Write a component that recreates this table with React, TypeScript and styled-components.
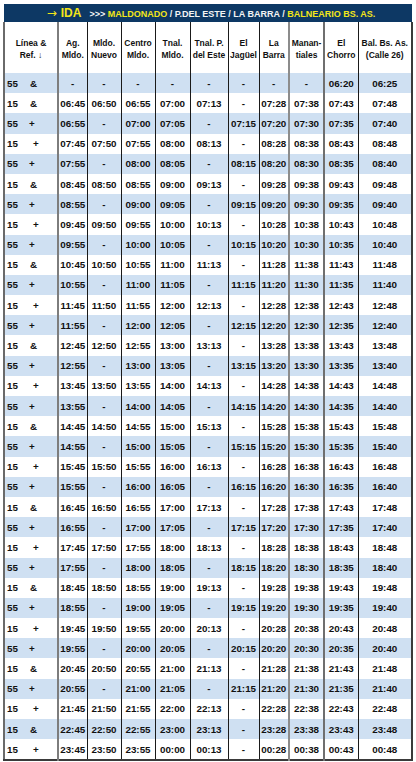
import styled, { createGlobalStyle } from "styled-components"

const NAVY = "#0d3864"
const YELLOW = "#f3e619"
const SHADE = "#cfe0f2"

const GlobalStyle = createGlobalStyle`
  html, body {
    margin: 0;
    padding: 0;
    background: #fff;
  }
  body {
    font-family: "Liberation Sans", Arial, sans-serif;
    color: #111;
  }
`

// widths of the eleven columns, and the rule on the right of each one
const COL_WIDTHS = [54, 29, 34, 34, 35, 38, 31, 30, 35, 34, 54]
const RIGHT_RULES = [
  "2px solid #7d7d7d",
  "1px solid #1a1a1a",
  "1px solid #1a1a1a",
  "1px solid #1a1a1a",
  "1px solid #1a1a1a",
  "1px solid #1a1a1a",
  "1px solid #1a1a1a",
  "2px solid #8c8c8c",
  "2px solid #6f6f6f",
  "1px solid #1a1a1a",
  "2px solid #3a3a3a",
]

const HEADINGS = [
  ["Línea &", "Ref. ↓"],
  ["Ag.", "Mldo."],
  ["Mldo.", "Nuevo"],
  ["Centro", "Mldo."],
  ["Tnal.", "Mldo."],
  ["Tnal. P.", "del Este"],
  ["El", "Jagüel"],
  ["La", "Barra"],
  ["Manan-", "tiales"],
  ["El", "Chorro"],
  ["Bal. Bs. As.", "(Calle 26)"],
]

type Trip = {
  line: "15" | "55"
  sign: "&" | "+"
  times: string[]
}

const hhmm = (h: number, m: number) =>
  `${String(h % 24).padStart(2, "0")}:${String(m).padStart(2, "0")}`

const line15 = (h: number): Trip => ({
  line: "15",
  sign: h % 2 === 0 ? "&" : "+",
  times: [
    hhmm(h, 45),
    hhmm(h, 50),
    hhmm(h, 55),
    hhmm(h + 1, 0),
    hhmm(h + 1, 13),
    "-",
    hhmm(h + 1, 28),
    hhmm(h + 1, 38),
    hhmm(h + 1, 43),
    hhmm(h + 1, 48),
  ],
})

const line55 = (h: number): Trip => ({
  line: "55",
  sign: "+",
  times: [
    hhmm(h, 55),
    "-",
    hhmm(h + 1, 0),
    hhmm(h + 1, 5),
    "-",
    hhmm(h + 1, 15),
    hhmm(h + 1, 20),
    hhmm(h + 1, 30),
    hhmm(h + 1, 35),
    hhmm(h + 1, 40),
  ],
})

const buildTrips = (): Trip[] => {
  const trips: Trip[] = [
    { line: "55", sign: "&", times: ["-", "-", "-", "-", "-", "-", "-", "-", "06:20", "06:25"] },
  ]
  for (let h = 6; h <= 20; h++) trips.push(line15(h), line55(h))
  for (let h = 21; h <= 23; h++) trips.push(line15(h))
  return trips
}

const TRIPS = buildTrips()

const App = () => {
  return (
    <Sheet>
      <GlobalStyle />
      <TitleBar>
        <Arrow>→</Arrow>
        <Direction>IDA</Direction>
        <Route>
          <Light>&gt;&gt;&gt; </Light>
          <Yellow>MALDONADO</Yellow>
          <Light> / P.DEL ESTE / LA BARRA / </Light>
          <Yellow>BALNEARIO BS. AS.</Yellow>
        </Route>
      </TitleBar>
      <Timetable>
        <colgroup>
          {COL_WIDTHS.map((w, i) => (
            <col key={i} style={{ width: w }} />
          ))}
        </colgroup>
        <thead>
          <tr>
            {HEADINGS.map(([a, b], i) => (
              <HeadCell key={i} $col={i}>
                {a}
                <br />
                {b}
              </HeadCell>
            ))}
          </tr>
        </thead>
        <tbody>
          {TRIPS.map((trip, r) => (
            <Row key={r} $shaded={r % 2 === 0}>
              <LineCell $col={0}>
                <LineNo>{trip.line}</LineNo>
                <Sign $shift={trip.sign === "&" ? 1 : trip.line === "15" ? 4 : 0}>
                  {trip.sign}
                </Sign>
              </LineCell>
              {trip.times.map((time, c) => (
                <Cell key={c} $col={c + 1}>
                  {time}
                </Cell>
              ))}
            </Row>
          ))}
        </tbody>
      </Timetable>
    </Sheet>
  )
}

const Sheet = styled.div`
  width: 409px;
  padding: 4px 0 0 3px;
`

const TitleBar = styled.div`
  display: flex;
  align-items: baseline;
  justify-content: center;
  height: 18px;
  padding-left: 6px;
  margin-left: 1px;
  background: ${NAVY};
  font-weight: bold;
  line-height: 18px;
  white-space: nowrap;
`

const Arrow = styled.span`
  color: ${YELLOW};
  font-family: "DejaVu Sans", sans-serif;
  font-size: 12px;
  font-weight: normal;
  margin-right: 4px;
`

const Direction = styled.span`
  color: ${YELLOW};
  font-size: 12px;
  margin-right: 8px;
`

const Route = styled.span`
  font-size: 9px;
`

const Light = styled.span`
  color: #f4f4f4;
  white-space: pre;
`

const Yellow = styled.span`
  color: ${YELLOW};
`

const Timetable = styled.table`
  width: 409px;
  table-layout: fixed;
  border-collapse: collapse;
  border-left: 2px solid #6a6a6a;
  border-bottom: 2px solid #3a3a3a;
`

const HeadCell = styled.th<{ $col: number }>`
  height: 48px;
  padding: 3px 0 0;
  border-right: ${({ $col }) => RIGHT_RULES[$col]};
  background: #fff;
  font-size: 8.5px;
  font-weight: bold;
  line-height: 12.5px;
  text-align: center;
  vertical-align: middle;
  white-space: nowrap;
`

const Row = styled.tr<{ $shaded: boolean }>`
  background: ${({ $shaded }) => ($shaded ? SHADE : "#fff")};
`

const Cell = styled.td<{ $col: number }>`
  height: 20.2px;
  padding: 0;
  border-right: ${({ $col }) => RIGHT_RULES[$col]};
  font-size: 9.8px;
  font-weight: bold;
  text-align: center;
  vertical-align: middle;
  white-space: nowrap;
`

const LineCell = styled(Cell)`
  text-align: left;
  padding-left: 2px;
`

const LineNo = styled.span`
  display: inline-block;
  width: 22px;
`

const Sign = styled.span<{ $shift: number }>`
  margin-left: ${({ $shift }) => $shift}px;
`

export default App
